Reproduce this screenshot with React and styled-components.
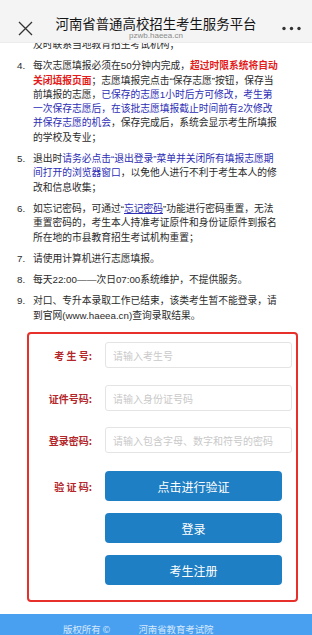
import React from 'react';
import styled, { createGlobalStyle } from 'styled-components';

const GlobalStyle = createGlobalStyle`
  html, body {
    margin: 0;
    padding: 0;
    background: #fff;
    overflow: hidden;
  }
  body {
    font-family: 'Liberation Sans', 'Noto Sans CJK SC', sans-serif;
  }
`;

const Page = styled.div`
  width: 312px;
  height: 635px;
  display: flex;
  flex-direction: column;
  overflow: hidden;
`;

const Header = styled.div`
  height: 43px;
  flex-shrink: 0;
  display: grid;
  grid-template-columns: 50px 1fr 50px;
  background: #f4f4f4;
  border-bottom: 1px solid #ececec;
  box-sizing: border-box;
  position: relative;
  z-index: 1;
`;

const Side = styled.div`
  display: flex;
  justify-content: ${p => (p.$right ? 'flex-end' : 'flex-start')};
  padding: 21px ${p => (p.$right ? '9px' : '0')} 0 ${p => (p.$right ? '0' : '18px')};
  color: #333;
`;

const TitleBox = styled.div`
  display: flex;
  flex-direction: column;
  align-items: center;
  padding-top: 16px;
`;

const Title = styled.div`
  font-family: 'Noto Sans CJK SC', sans-serif;
  font-size: 13.4px;
  line-height: 14px;
  color: #151515;
  white-space: nowrap;
`;

const SubTitle = styled.div`
  font-family: 'Liberation Sans', sans-serif;
  font-size: 8px;
  line-height: 9px;
  margin-top: 1px;
  color: #8a8a8a;
`;

const Notes = styled.div`
  overflow: hidden;
  flex-shrink: 0;
`;

const List = styled.div`
  margin-top: -5px;
  padding: 0 0 0 17px;
`;

const Item = styled.div`
  display: flex;
  font-size: 9.75px;
  line-height: 14.3px;
  color: #2a2a2a;
  margin-bottom: 7px;
  white-space: nowrap;
`;

const Num = styled.span`
  width: 16px;
  flex-shrink: 0;
`;

const Red = styled.span`
  color: #e31b1b;
  font-weight: 600;
`;

const Blue = styled.span`
  color: #2d2db5;
  text-decoration: ${p => (p.$link ? 'underline' : 'none')};
`;

const Rule = styled.div`
  margin: -2px 30px 0 17px;
  height: 1px;
  background: #4a4a4a;
`;

const FormBox = styled.div`
  margin: 4px 14px 0 27px;
  border: 2px solid #e8302a;
  border-radius: 4px;
  padding: 8px 4px 15px 0;
  flex-shrink: 0;
`;

const Row = styled.div`
  display: flex;
  align-items: center;
  gap: 13px;
  margin-top: ${p => p.$space || 0}px;
`;

const Label = styled.div`
  width: 63px;
  flex-shrink: 0;
  text-align: right;
  font-family: 'Noto Sans CJK SC', sans-serif;
  font-size: 10px;
  font-weight: 700;
  color: #b3262a;
  white-space: pre;
`;

const Input = styled.input`
  flex: 1;
  min-width: 0;
  height: 26px;
  box-sizing: border-box;
  border: 1px solid #e4e4e4;
  border-radius: 3px;
  padding: 0 7px;
  font-family: 'Noto Sans CJK SC', sans-serif;
  font-size: 10px;
  outline: none;
  &::placeholder {
    color: #c9c9c9;
  }
`;

const Button = styled.button`
  width: 177px;
  height: 30px;
  border: none;
  border-radius: 4px;
  background: #1f7fc4;
  color: #fff;
  font-family: 'Noto Sans CJK SC', sans-serif;
  font-size: 12px;
  padding: 0;
  margin-left: ${p => (p.$indent ? '76px' : '0')};
`;

const Footer = styled.div`
  margin-top: 12px;
  height: 30px;
  flex-shrink: 0;
  background: #49a0f1;
  display: flex;
  padding: 9px 0 0 63px;
  box-sizing: border-box;
  font-family: 'Noto Sans CJK SC', sans-serif;
  font-size: 9.4px;
  line-height: 12px;
  color: #d6e9fc;
  gap: 28px;
`;

const CloseIcon = () => (
  <svg width="15" height="15" viewBox="0 0 15 15">
    <path d="M1 1 L14 14 M14 1 L1 14" stroke="#333" strokeWidth="1.3" fill="none" />
  </svg>
);

const MoreIcon = () => (
  <svg width="22" height="15" viewBox="0 0 22 15">
    <circle cx="3" cy="7.5" r="1.7" fill="#333" />
    <circle cx="10.5" cy="7.5" r="1.7" fill="#333" />
    <circle cx="18" cy="7.5" r="1.7" fill="#333" />
  </svg>
);

export default function App() {
  return (
    <Page>
      <GlobalStyle />
      <Header>
        <Side>
          <CloseIcon />
        </Side>
        <TitleBox>
          <Title>河南省普通高校招生考生服务平台</Title>
          <SubTitle>pzwb.haeea.cn</SubTitle>
        </TitleBox>
        <Side $right>
          <MoreIcon />
        </Side>
      </Header>

      <Notes>
        <List>
          <Item>
            <Num />
            <span>及时联系当地教育招生考试机构；</span>
          </Item>
          <Item>
            <Num>4.</Num>
            <span>
              每次志愿填报必须在50分钟内完成，<Red>超过时限系统将自动<br />关闭填报页面</Red>；志愿填报完点击“保存志愿”按钮，保存当<br />
              前填报的志愿，<Blue>已保存的志愿1小时后方可修改，考生第<br />一次保存志愿后，在该批志愿填报截止时间前有2次修改<br />并保存志愿的机会</Blue>，保存完成后，系统会显示考生所填报<br />
              的学校及专业；
            </span>
          </Item>
          <Item>
            <Num>5.</Num>
            <span>
              退出时<Blue>请务必点击“退出登录”菜单并关闭所有填报志愿期<br />间打开的浏览器窗口</Blue>，以免他人进行不利于考生本人的修<br />
              改和信息收集；
            </span>
          </Item>
          <Item>
            <Num>6.</Num>
            <span>
              如忘记密码，可通过“<Blue $link>忘记密码</Blue>”功能进行密码重置，无法<br />
              重置密码的，考生本人持准考证原件和身份证原件到报名<br />
              所在地的市县教育招生考试机构重置；
            </span>
          </Item>
          <Item>
            <Num>7.</Num>
            <span>请使用计算机进行志愿填报。</span>
          </Item>
          <Item>
            <Num>8.</Num>
            <span>每天22:00——次日07:00系统维护，不提供服务。</span>
          </Item>
          <Item>
            <Num>9.</Num>
            <span>
              对口、专升本录取工作已结束，该类考生暂不能登录，请<br />
              到官网(www.haeea.cn)查询录取结果。
            </span>
          </Item>
        </List>
      </Notes>
      <Rule />

      <FormBox>
        <Row>
          <Label>{'考 生 号:'}</Label>
          <Input placeholder="请输入考生号" />
        </Row>
        <Row $space={17}>
          <Label>证件号码:</Label>
          <Input placeholder="请输入身份证号码" />
        </Row>
        <Row $space={16}>
          <Label>登录密码:</Label>
          <Input type="password" placeholder="请输入包含字母、数字和符号的密码" />
        </Row>
        <Row $space={18}>
          <Label>{'验 证 码:'}</Label>
          <Button>点击进行验证</Button>
        </Row>
        <Row $space={12}>
          <Button $indent>登录</Button>
        </Row>
        <Row $space={12}>
          <Button $indent>考生注册</Button>
        </Row>
      </FormBox>

      <Footer>
        <span>版权所有 ©</span>
        <span>河南省教育考试院</span>
      </Footer>
    </Page>
  );
}
